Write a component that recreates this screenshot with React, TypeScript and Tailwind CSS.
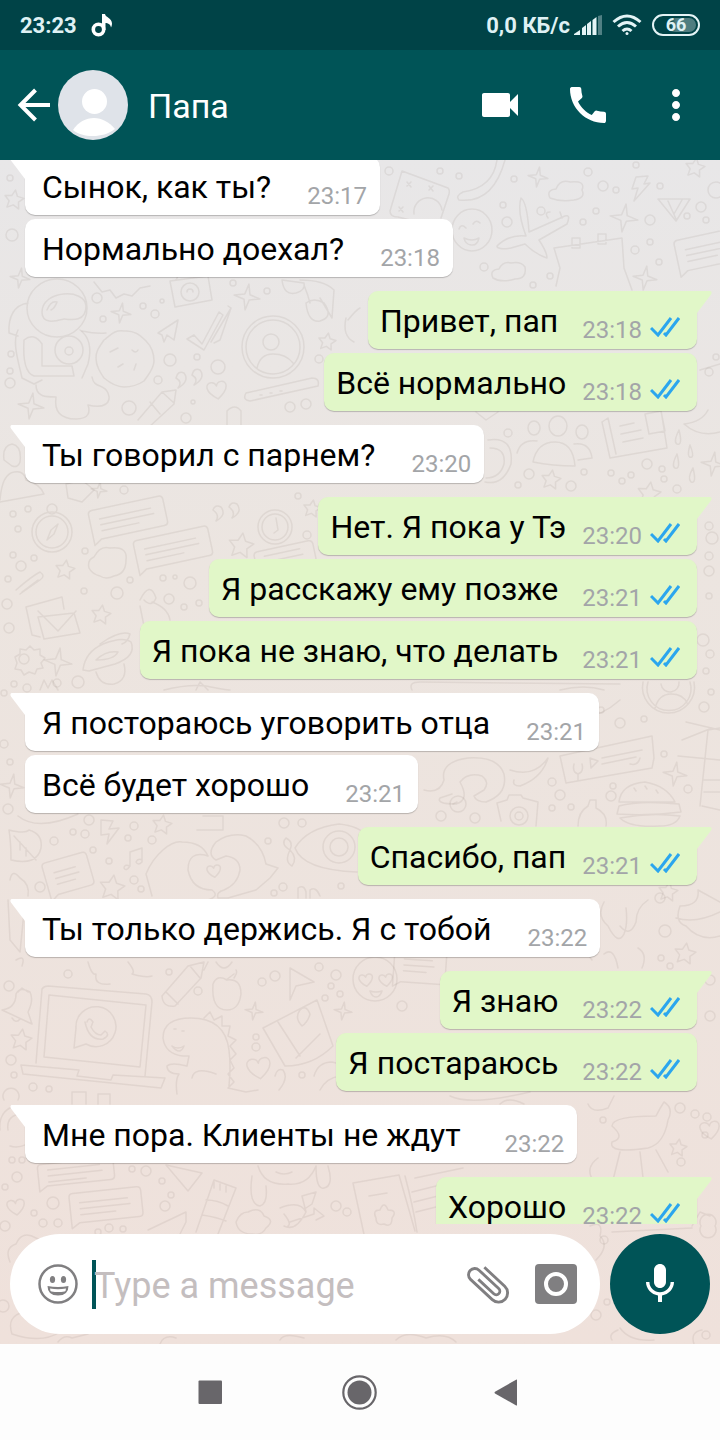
import { MdCall, MdMoreVert, MdVideocam } from 'react-icons/md';

interface Message {
  text: string;
  time: string;
  mine?: boolean;
}

// Consecutive messages of one sender form a group, the first one has the tail.
// A few of the texts were sent with a trailing space.
const groups: Message[][] = [
  [
    { text: 'Сынок, как ты?', time: '23:17' },
    { text: 'Нормально доехал?', time: '23:18' },
  ],
  [
    { text: 'Привет, пап ', time: '23:18', mine: true },
    { text: 'Всё нормально', time: '23:18', mine: true },
  ],
  [{ text: 'Ты говорил с парнем?', time: '23:20' }],
  [
    { text: 'Нет. Я пока у Тэ', time: '23:20', mine: true },
    { text: 'Я расскажу ему позже ', time: '23:21', mine: true },
    { text: 'Я пока не знаю, что делать ', time: '23:21', mine: true },
  ],
  [
    { text: 'Я постораюсь уговорить отца', time: '23:21' },
    { text: 'Всё будет хорошо', time: '23:21' },
  ],
  [{ text: 'Спасибо, пап', time: '23:21', mine: true }],
  [{ text: 'Ты только держись. Я с тобой', time: '23:22' }],
  [
    { text: 'Я знаю ', time: '23:22', mine: true },
    { text: 'Я постараюсь ', time: '23:22', mine: true },
  ],
  [{ text: 'Мне пора. Клиенты не ждут ', time: '23:22' }],
  [{ text: 'Хорошо', time: '23:22', mine: true }],
];

// x, y, radius
const dots = [
  [12, 235, 6], [10, 178, 3], [97, 298, 5], [103, 319, 3], [143, 306, 3], [155, 314, 4], [162, 301, 2],
  [170, 360, 6], [218, 367, 7], [197, 357, 3], [158, 380, 4], [129, 408, 7], [10, 383, 5], [10, 371, 3],
  [11, 354, 3], [186, 418, 5], [290, 407, 5], [306, 404, 5], [193, 402, 2], [233, 283, 3], [267, 291, 3],
  [319, 359, 4], [389, 171, 4], [440, 171, 3], [459, 176, 3], [514, 179, 3], [503, 205, 3], [507, 222, 5],
  [541, 211, 4], [588, 172, 4], [603, 186, 5], [616, 190, 3], [596, 211, 3], [583, 222, 3], [650, 220, 5],
  [660, 186, 3], [701, 207, 5], [687, 216, 3], [706, 220, 3], [635, 250, 4], [650, 242, 3], [659, 262, 3],
  [484, 267, 4], [550, 276, 3], [533, 285, 3], [716, 190, 8], [636, 165, 3], [709, 372, 4], [716, 357, 3],
  [508, 433, 4], [529, 474, 5], [518, 485, 3], [571, 486, 5], [584, 472, 3], [611, 473, 3], [622, 481, 3],
  [631, 475, 3], [647, 464, 5], [662, 469, 3], [664, 479, 3], [677, 489, 4], [13, 514, 3], [28, 509, 3],
  [18, 529, 3], [13, 555, 3], [21, 566, 5], [34, 558, 3], [8, 579, 3], [85, 551, 3], [84, 591, 3],
  [117, 593, 6], [130, 580, 3], [163, 578, 3], [175, 577, 2], [190, 583, 6], [169, 599, 5], [199, 603, 3],
  [184, 607, 3], [7, 604, 5], [9, 628, 5], [14, 684, 3], [27, 688, 4], [57, 683, 4], [78, 682, 6],
  [4, 744, 4], [10, 762, 3], [4, 693, 3], [124, 490, 4], [298, 496, 3], [307, 535, 4], [709, 526, 4],
  [712, 538, 6], [709, 556, 4], [709, 571, 5], [709, 596, 3], [703, 640, 6], [710, 654, 4], [706, 671, 3],
  [620, 723, 5], [601, 710, 3], [644, 719, 3], [704, 707, 5], [711, 692, 3], [664, 754, 3], [552, 782, 4],
  [560, 795, 5], [552, 808, 3], [571, 807, 3], [611, 796, 5], [613, 786, 3], [688, 789, 4], [475, 818, 5],
  [441, 816, 5], [458, 804, 8], [8, 809, 5], [89, 820, 5], [54, 841, 4], [73, 832, 3], [85, 834, 4],
  [93, 850, 3], [134, 826, 4], [128, 838, 3], [152, 840, 4], [109, 861, 3], [134, 880, 4], [141, 889, 3],
  [40, 887, 5], [268, 841, 3], [284, 823, 5], [302, 823, 4], [283, 887, 4], [274, 893, 3], [341, 886, 3],
  [660, 898, 5], [665, 931, 6], [661, 958, 3], [670, 966, 3], [402, 1006, 5], [710, 980, 5], [710, 1016, 5],
  [9, 986, 5], [68, 974, 4], [198, 991, 4], [169, 972, 3], [262, 982, 4], [275, 976, 5], [319, 967, 4],
  [331, 986, 3], [325, 998, 3], [340, 994, 3], [336, 975, 5], [256, 1037, 3], [256, 1047, 4], [302, 1075, 3],
  [33, 1087, 4], [11, 1060, 5], [14, 1075, 3], [49, 1089, 3], [17, 1177, 5], [12, 1160, 3], [22, 1160, 3],
  [132, 1169, 3], [146, 1171, 5], [162, 1181, 3], [5, 1187, 3], [34, 1213, 3], [43, 1223, 4], [58, 1223, 4],
  [53, 1203, 6], [5, 1226, 5], [165, 1206, 5], [171, 1195, 3], [98, 1232, 3], [109, 1228, 4], [123, 1229, 3],
  [336, 1206, 5], [347, 1212, 4], [680, 1108, 5], [707, 1117, 4], [695, 1114, 4], [603, 1120, 3],
  [681, 1162, 4], [705, 1135, 3], [596, 1315, 5], [607, 1302, 3], [706, 1335, 4], [604, 1240, 4], [3, 1306, 6],
];

// x, y, scale
const sparkles = [
  [247, 297, 13], [121, 313, 10], [31, 406, 13], [20, 278, 10], [538, 177, 10], [624, 218, 14],
  [645, 278, 12], [713, 464, 12], [58, 662, 14], [675, 774, 12], [12, 786, 12], [254, 1011, 9],
  [343, 1011, 9], [99, 490, 8],
];

const stars = [
  [14, 200, 10], [327, 342, 9], [695, 168, 10], [65, 570, 10], [101, 615, 10], [241, 546, 13],
  [312, 509, 9], [551, 480, 10], [649, 494, 12], [162, 825, 10], [112, 888, 13], [685, 954, 11],
  [21, 1040, 11], [678, 1148, 9], [668, 892, 10],
];

const hearts = [
  [217, 390, 10], [259, 1068, 12], [16, 1207, 9], [214, 871, 7], [710, 1130, 10], [366, 980, 7], [386, 980, 7],
];

// x, y, width, height, rotation
const notes = [
  [128, 518, 76, 30, -12], [173, 548, 76, 30, -12], [285, 557, 60, 22, -12], [68, 874, 46, 34, -16],
  [76, 1172, 76, 22, -6], [106, 1205, 72, 30, -6], [708, 250, 64, 32, -12], [420, 965, 52, 36, 4],
];

const shapes = [
  // astronaut and planet
  'M27 308a30 29 0 1 1 60 0a30 29 0 1 1-60 0M42 312c0-22 43-24 44-6c0 16-14 14-22 13c-8 2-22 6-22-7M47 310q4-10 10-8q-2 6-6 8M28 303c-14 2-20 14-19 30l9 3M18 330c-6 12 0 30 4 48l12 6l8-4M24 340q10-8 18 4v22h30l2 10H34q-12-4-10-36M36 385c0 12 10 12 20 12c-2 14 4 22 20 22c14 0 14-8 12-14c16 4 24-2 20-12c-4-10-14-4-16-16M80 330q14 10 8 34l-6 14M55 350a14 14 0 1 1 28 0a14 14 0 1 1-28 0M65 351a4 4 0 1 1 8 0a4 4 0 1 1-8 0',
  'M96 358c0-8 4-12 8-18c8-6 10-10 20-9c10-1 16 4 22 10c6 6 8 12 8 20c0 8-6 14-10 20c-6 4-12 6-20 6c-8 0-14-4-20-9c-4-6-8-12-8-20M110 352l8-4M118 367l5-3M132 350q4 4 6 0M134 370l2-6M82 331q14 3 24 2',
  // contact badge
  'M242 347a31 31 0 1 1 62 0a31 31 0 1 1-62 0M246 347a27 27 0 1 1 54 0a27 27 0 1 1-54 0M263 342a8 8 0 1 1 16 0a8 8 0 1 1-16 0M257 368q3-14 16-14t20 9',
  'M643 682a26 26 0 1 0 51 0M648 682a22 22 0 1 0 42 0M655 708q4-14 16-14t16 9M661 684a9 9 0 0 0 18-2',
  // ticks, plane, quotes, pencil, ruler
  'M187 339l7-4l8 9l17-32l4 3l-19 35zM211 342l20-34l-3-2M231 308l-11 32l-6 3M158 333l20-13l-4 20l-7-5l-3 7l-2-7z',
  'M176 378q2-8 8-5q6 8-6 15q5-6-2-10M192 375q2-8 8-5q6 8-6 15q5-6-2-10M138 420l24-28l14-2l-2 14l-26 24M150 402l10 12M162 392l12 11',
  'M246 393l66-15q8 0 6 8l-68 15q-8-1-4-8M260 395h2M270 393h2M280 391h2M227 425v-14q8-8 14 0v14',
  // camera and glasses
  'M170 281l38-5l4 24l-37 7zM181 292a9 9 0 1 1 18 0a9 9 0 1 1-18 0M187 292a3 3 0 1 1 6 0M176 280l2-4h8M94 282l8 10l8-2l6 8l8-4l8 2l8-8l10-2',
  'M282 280q2 16 14 13q10-3 8-10l-22-3M306 303q2 20 14 18q14-4 4-18q-10-6-18 0M304 285q4 10 6 18M300 280q24 0 34 10l-2 28l-12-20M348 320q8-10 12-12M346 318q-4 18 8 24',
  // dice, banana, clouds, bolt, airplane
  'M402 171l46 17q2 2 1 6l-8 24M402 171l-12 40q0 6 8 6l16 4M407 182l4 5m0-5l-4 4M429 186l4 5m0-5l-4 4M399 207l4 5m0-5l-4 4M414 214a14 14 0 0 1 28-4',
  'M497 160q-4 28-34 32q-8 4-4 8q34 4 46-40M550 198q-4-8 6-9q4-10 14-7q16-2 12 8q4 8-8 10q-14 2-24-2M493 278q-4-8 6-9q4-8 12-6q10-2 14 4q2 12-10 12q-14 4-22-1',
  'M636 177l12-1l-4 8l6-1l-16 18l4-13l-6 1zM526 236c-6-16-8-28-5-38q6 4 8 34l36-16q6-2 2 8l-28 16q8 12 8 18q-12-4-22-14l-14 4q-14 2-14-2q12-12 29-10M548 218q-4-6 2-6M560 212l2 6',
  // smiling faces
  'M452 230a20 21 0 1 1 40 0a20 21 0 1 1-40 0M459 229q2-6 7-1M473 224q3-5 7-1M464 238q8 4 15 0q-2 8-8 7t-7-7',
  'M353 979a22 22 0 1 1 44 0a22 22 0 1 1-44 0M370 991q6 2 12 0q-2 6-6 6t-6-6',
  // calendar and party hat
  'M554 248l68-10l2 30l8 22M554 248l6 20l-4 18M572 238h8v10h-8zM598 234h8v10h-8zM658 199h32l-14 22zM668 201l8 18M682 200l-8 14',
  // people, news page, drops
  'M533 462q4-20 22-20t20 24q-22 0-42-4M549 426a9 10 0 1 1 18 0a9 10 0 1 1-18 0M528 428a6 7 0 1 1 12 0a6 7 0 1 1-12 0M576 432a6 7 0 1 1 12 0a6 7 0 1 1-12 0M517 453q4-14 20-12M574 444q16-2 18 14l-14 2',
  'M602 422l8 36l57-10l-6-38M602 422l6-4l8 36M620 426l14-3M621 434l20-4M623 442l20-4M645 414l16-3l4 20l-16 3zM679 430q-6 12-2 14q6 2 2-14M690 445q4 10 2 12q-6 2-2-12M677 454q-6 12-2 14q6 2 2-14M693 468q-6 10-2 14q6 2 2-14',
  'M488 440q26-4 23 24q-8 22-26 18M490 448q16 0 14 16q-4 14-18 14M684 424q18-2 24-14M684 424q16 14 36 8M700 370l20-6M476 412l10 8l12-8',
  // person, compass, speech, sticker
  'M4 460q-2-14 8-16q10 2 8 18q-2 6-8 4zM0 500q2-26 14-28q10-2 12 8q14 4 18 14l-44 8M66 484l16-4l12 10l-12 12l-14-4z',
  'M32 532a20 20 0 1 1 40 0a20 20 0 1 1-40 0M36 532a16 16 0 1 1 32 0a16 16 0 1 1-32 0M47 540l4-10l7-6l-4 10zM47 509a5 5 0 1 1 10 0a5 5 0 1 1-10 0',
  'M89 568q-2-8 5-11q6-12 16-9q18-2 16 12q0 14-12 16q-8 4-14 0q-8-2-11-8M258 527a17 17 0 1 1 34 0a17 17 0 1 1-34 0M262 527a13 13 0 1 1 26 0a13 13 0 1 1-26 0M276 518l2 12l-4 3',
  'M213 510q2-6 8-3q6 8-5 14q4-6-3-11M229 507q2-6 8-3q6 8-5 14q4-6-3-11',
  // letters, paperclip, gear, rocket
  'M38 617l36 -4l6 20l-36 6zM38 611l20 20l18-20M26 607l36-10l2 12M26 607l6 28l8 2M16 590q16-14 24-18q6 4 0 8l-20 14M22 592l16-12',
  'M15 657l5-3v-5l6 1l4-4l4 4l6-1l0 6l5 3l-4 5l2 5l-6 1l-2 5l-6-2l-5 3l-3-5l-6-1l2-6zM19 659a5 5 0 1 1 10 0a5 5 0 1 1-10 0',
  'M83 670q2-18 20-26q20-8 28-2q6 14-16 22l-26 7zM96 660q10-10 22-8q-4 8-22 8M100 644q20-14 30-10q-2 8-8 10M96 672q4 14 18 12q14-4 10-20M140 600q10-20 16-2q-4 10-12 2M140 606l4 20M152 602q16 6 18 18',
  'M40 690l4-10l4 8l4-8l6 10M164 690q24-6 42-4q20 4 24 4M196 690l4-8l8 8',
  // gamepad, dog, audio player, burger, tower
  'M424 790q16 4 20-10q-4-18 24-22q30-2 36 16q4 20-18 28q-10 0-12-6l10-6q6-8-2-14q-14-4-22 6q10 18-4 22q-20 0-16-6l12-4M510 770q24 8 38-12q-6 20-28 28q-8 0-6-6',
  'M560 756l92-20l2 22l-2 10l-86 15zM574 764q-2 8 4 10q6-2 4-10M578 774v6M590 758l8 3l-7 7zM602 758l40-8M602 764l34-7M630 764q8 2 10-6',
  'M619 802q2-18 26-20q22 4 30 20zM619 806q20-6 60-2l2 8q-30 4-64 2zM620 818q30-6 60-2q-4 10-20 10q-30 2-40-8M634 788l2 3M645 786l2 3M656 790l2 3',
  'M682 740l30-12M686 722l34 8M678 756l42 4M700 806l8-76l12-2M704 780h16M704 792h16M702 806l18 4',
  'M497 803l10-3l2-5h12l2 3l15 4l-2 24M497 803l4 18M510 816a9 9 0 1 1 18 0a9 9 0 1 1-18 0M515 816a4 4 0 1 1 8 0a4 4 0 1 1-8 0M578 826q0-14 10-20l2-6h6l0 8q12 6 10 18',
  'M453 804l4-2M412 690q-4-8 8-8l200 2M560 690q24-6 44 0M620 700q-18 16-38 18',
  // leaf, bolt, notes, hands
  'M9 830q16 4 20 0q14 4 12 18q-4 18-30 12q0-18-2-30M14 836l22 24M20 842v8M26 848v8M18 816q20 16 60-2M101 820l12 1l-4 8l10-1l-12 16l2-10l-8 1z',
  'M130 852l12-4v14q-4 4-6 0q2-4 6-2M130 852v14q-4 6-6 2q0-4 6-2M146 874c8-20 26-34 36-32q20 0 26 14M146 874l6 22M208 856q-20-6-20 14q4 20 24 20q8 6-4 10h-36',
  'M216 842q14-10 30-6q16 8 20 28l12 4l-8 10l-14 12l-28 8h-10q-2-6 6-8q14-6 16-20q0-12-14-14l-10 4q-10-6 0-18',
  'M295 848q12-20 44-24q20 2 28 12M295 848q8 22 62 24M323 847a16 16 0 1 1 32 0a16 16 0 1 1-32 0M330 847a9 9 0 1 1 18 0a9 9 0 1 1-18 0M290 850q-10-6-4-12q8 4 4 12q-6 12 2 16q6-8-2-16M298 898v-10q6-4 8 4v6M310 898v-8q6-4 10 6',
  'M197 830h26v-14h-20M10 880q2-12 10-2q10 6 8 18M8 900l2 40l10 12l4-40M16 960q10-6 6 6',
  'M604 902q-8 14 4 24q10 20 16 8q4-10 2-26M620 926q10 12 16-4q0-14 12-22M680 906q20 0 18-16l22 12M680 906q-6 16 6 20q14 16 34 10M676 918q20 6 44-6',
  'M604 954q10-8 14 14M638 948q10 6 4 20M586 952l6 8',
  // bell, laptop, pencil, apple, dino
  'M2 1010q14-2 14-16q4-8 14 -2q4 8-2 20l4 12zM18 992l4-4l6 4M12 1018q4 6 8 1',
  'M42 989q2-3 6-3l98 8q6 1 6 8l-7 74M42 989l-6 74M49 995l97 10l-6 62l-96-10zM21 1065l58 5l-2 6l34 4l2-5l52 3l-4 10l-138-14zM76 1028a20 20 0 1 1 10 16l-12 4zM87 1022q2-6 6 0l-2 5q4 8 10 8l4-4q6 4-2 8q-14 2-18-17',
  'M162 996l26-30l16-4l-3 16l-26 28q-12 2-13-10M166 992l12 12M190 966l10 12M213 984q4-10 14-4q14-2 14 14q-2 16-14 16q-16 0-14-26M226 980l8-6M234 978q4-6 2-8',
  'M88 962q4 14 8 12q-2 12 14 10M128 962q8 10 4 12q14 4 20 2M216 962q8 12 16 0M204 970l4-8',
  'M163 1038q0-20 28-20q34 0 38 32q2 16 0 36M163 1038q2 16 20 18l6 0l-2 10q-16-4-20 0q0 8 12 8q-4 6-2 20M192 1078q2-12 24-4M172 1046q6 4 12 0q-4 10-12 0M174 1029h2M182 1031h2M204 1018l6-6l4 8l8-4l0 10l8 0l-2 10l8 4l-6 6l6 8l-6 6l4 8l-6 6l6 8l-6 6l18 4l12-2',
  // arrow, map, mic
  'M290 968l24 14l-18 4l-6 14zM263 1028l54-28l16 46q-20 20-48 20zM278 1022l22 34M300 1010q6-6 10 4q-2 8-8 12q-8-8-2-16M296 1058l24-24M275 1076q2-8 8-6q6 8-4 20M314 1076q4-14 18-14l8 2M320 1090q6-12 20-14',
  'M72 1104v-12h14v12M98 1104v-10h12v10M4 1100a8 8 0 1 1 14 0M0 1130q-2-18 14-24M10 1146q12 4 26-8M8 1130q-2-14 12-16',
  // cone, socks, map arrow, dog
  'M166 1165l36 8l-14 18zM196 1232l18-52l22 8l-18 46M202 1215q14 2 24 6M206 1200q12 0 22 6M214 1182v6M220 1184v6M226 1186v6M148 1230l38-18v10l-6 12',
  'M252 1176q-4 28 8 30q8-2 6-20M258 1166q6 20 30 18q20 2 28-18M316 1166q0 24 8 22q10-2 4-22M276 1172q8 4 16 0M236 1222q4-10 12-10q12-6 16 4q12 4 2 12q-4 8-14 6q-14 0-16-12',
  'M280 1208q20-8 26 4q-10 20-22 14M306 1212l-4-16l14-4l-4 12l-6 4M290 1222l24-8v-6l10 8l-8 4M284 1214q8 10 4 12',
  // book, flower, key, chair
  'M353 1183l46-8l16 56M353 1183l12 56M415 1178l48-10M405 1176q8 30 12 56M369 1196l18-3M412 1192l24-6M414 1202l24-6M416 1212l20-5M380 1210q4-10 8 0q10 0 4 8q0 10-8 6q-8 2-8-6q-4-8 4-8',
  'M612 1126q0-10 44-10q4-8 8-14q10 6 4 18q-4 24-20 28q-40 6-36-6q14-4 0-16M620 1152l-10 40M640 1152l4 34M656 1150l12 22M450 1096q20 10 80-4M500 1104q8-8 24 0M588 1104q4 10 20 4l6-12M598 1158q-14 10-4 24',
  'M692 1226l8-14l10 4M701 1226a8 8 0 1 1 14 0a8 8 0 1 1-14 0M590 1226q14-6 10 10q10 10-4 24M612 1232l80-4',
  // behind the composer
  'M10 1262q-6-14 6-18q6-14 20-6l8 4M12 1334q-6-18 12-22l6 4M12 1334q30 10 48-2M58 1342q6-8 14-4l16-4M160 1344q4-10 16-6M280 1340q4-8 24-2M396 1340q10-10 30-2q20-6 30 4M620 1328q10 14 34 12M694 1344q-4-12 8-14M618 1330q-10 4-6 10',
];

function starPath(points: number, inner: number) {
  const parts: string[] = [];
  for (let i = 0; i < points * 2; i++) {
    const r = i % 2 ? inner : 1;
    const a = (Math.PI * i) / points - Math.PI / 2 + 0.15;
    parts.push(`${(Math.cos(a) * r).toFixed(2)} ${(Math.sin(a) * r).toFixed(2)}`);
  }
  return `M${parts.join('L')}Z`;
}

const sparklePath = starPath(4, 0.28);
const fivePath = starPath(5, 0.5);

function Wallpaper() {
  return (
    <svg
      className="absolute inset-0 size-full"
      viewBox="0 160 720 1184"
      preserveAspectRatio="xMidYMid slice"
      fill="none"
      stroke="#8a7a76"
      strokeOpacity="0.13"
      strokeWidth="1.5"
      strokeLinejoin="round"
      strokeLinecap="round"
      aria-hidden="true"
    >
      {dots.map(([x, y, r], i) => (
        <circle key={i} cx={x} cy={y} r={r} />
      ))}
      {sparkles.map(([x, y, s], i) => (
        <path key={i} d={sparklePath} transform={`translate(${x} ${y}) scale(${s})`} vectorEffect="non-scaling-stroke" />
      ))}
      {stars.map(([x, y, s], i) => (
        <path key={i} d={fivePath} transform={`translate(${x} ${y}) scale(${s})`} vectorEffect="non-scaling-stroke" />
      ))}
      {hearts.map(([x, y, s], i) => (
        <path
          key={i}
          d="M0 .9C-1.3 0-1.1-.8-.5-.8Q-.1-.8 0-.4Q.1-.8.5-.8C1.1-.8 1.3 0 0 .9Z"
          transform={`translate(${x} ${y}) rotate(-8) scale(${s})`}
          vectorEffect="non-scaling-stroke"
        />
      ))}
      {notes.map(([x, y, w, h, r], i) => (
        <g key={i} transform={`translate(${x} ${y}) rotate(${r})`}>
          <path d={`M${-w / 2} ${h / 2 + 5}V${-h / 2 + 4}q0-4 4-4H${w / 2 - 4}q4 0 4 4V${h / 2 - 4}q0 4-4 4H${-w / 2 + 8}Z`} />
          <path d={`M${-w / 2 + 10}-5H${w / 2 - 14}M${-w / 2 + 10} 1H${w / 2 - 12}M${-w / 2 + 10} 7H${w / 8}`} />
        </g>
      ))}
      {shapes.map((d, i) => (
        <path key={i} d={d} />
      ))}
    </svg>
  );
}

function StatusBar() {
  return (
    <div className="flex h-[50px] shrink-0 items-center bg-[#004347] px-5 text-[22px] font-bold leading-none text-[#dff1f4]">
      <span className="pt-0.5">23:23</span>
      <svg className="ml-3.5 h-6 w-[22px]" viewBox="0 0 22 24" fill="none" aria-hidden="true">
        <circle cx="7.500" cy="16.500" r="5.200" stroke="#fff" strokeWidth="3.600" />
        <path d="M11 1h3c.5 3.500 7 4 7 9.500c0 1.500-.5 3-1 4c-.5-3.500-3.500-4.500-5.500-4.500v7H11z" fill="#fff" />
      </svg>
      <span className="ml-auto pt-0.5">0,0 КБ/с</span>
      <svg className="ml-1 h-5 w-7" viewBox="0 0 28 20" fill="#e4f4f6" aria-hidden="true">
        <path d="M0 20v-1l6-4v5zM8 20v-7l4-3v10zM13 20V9l4-3v14zM18.500 20V5l4-3v18z" />
        <path d="M24 20V1l4-1v20z" opacity="0.35" />
      </svg>
      <svg className="ml-2.5 h-[22px] w-[30px]" viewBox="0 0 30 22" fill="none" stroke="#e4f4f6" strokeWidth="3" aria-hidden="true">
        <path d="M1.500 8q13.500-12 27 0M6 12.500q9-8 18 0M10.500 17q4.500-4 9 0" />
        <circle cx="15" cy="19.500" r="1.500" fill="#e4f4f6" stroke="none" />
      </svg>
      <span className="ml-2.5 flex h-[22px] w-12 items-center justify-center rounded-full border-2 border-[#e4f4f6] bg-linear-to-r from-transparent from-35% via-[#4f7d80] via-50% to-[#4f7d80] bg-clip-content p-0.5 text-lg font-bold leading-none">
        66
      </span>
    </div>
  );
}

function ChatHeader() {
  return (
    <header className="flex h-[110px] shrink-0 items-center bg-[#005457] pl-4 pr-5 text-white">
      <button type="button" aria-label="Back" className="flex h-12 w-9 items-center justify-center">
        <svg className="size-9" viewBox="0 0 36 36" fill="none" stroke="currentColor" strokeWidth="4" aria-hidden="true">
          <path d="M34 18H5M19.500 3L4.500 18l15 15" />
        </svg>
      </button>
      <svg className="ml-1.5 size-[70px] shrink-0" viewBox="0 0 70 70" role="img" aria-label="Папа">
        <circle cx="35" cy="35" r="35" fill="#dfe3e9" />
        <circle cx="36.500" cy="31.500" r="12.500" fill="#fff" />
        <path d="M15 60C20 52 28 48 36 48s15 4 21 11C50 64 43 66 35 66s-15-2-20-6z" fill="#fff" />
      </svg>
      <h1 className="ml-5 min-w-0 flex-1 truncate pt-0.5 text-[34px] font-normal leading-10">Папа</h1>
      <div className="flex gap-10">
        <button type="button" aria-label="Video call"><MdVideocam className="size-12" /></button>
        <button type="button" aria-label="Call"><MdCall className="size-12" /></button>
        <button type="button" aria-label="More options"><MdMoreVert className="size-12" /></button>
      </div>
    </header>
  );
}

function ReadTicks() {
  return (
    <svg className="mb-3 ml-2 h-5 w-[30px]" viewBox="0 0 30 20" fill="none" stroke="#2ba6ee" strokeWidth="3" role="img" aria-label="Read">
      <path d="M1 11l7 7L21 1M14 16l2 2L29 1" />
    </svg>
  );
}

function Bubble({ message, tail }: { message: Message; tail: boolean }) {
  const { text, time, mine } = message;
  const corner = tail ? (mine ? 'rounded-tr-none' : 'rounded-tl-none') : '';

  return (
    <li
      className={`relative flex items-end whitespace-pre rounded-[10px] shadow-[0_1px_1px_rgba(0,0,0,0.22)] ${corner} ${
        mine ? 'self-end bg-[#e1f7c8] pl-3 pr-[17px]' : 'self-start bg-white pl-[17px] pr-[13px]'
      }`}
    >
      {tail && (
        <svg
          className={`absolute top-0 h-[22px] w-4 ${mine ? '-right-[15px] fill-[#e1f7c8]' : '-left-[15px] fill-white'}`}
          viewBox="0 0 16 22"
          aria-hidden="true"
        >
          <path d={mine ? 'M0 0H14.500Q16.500 1 15 3.500L1 22H0z' : 'M16 0H1.500Q-.5 1 1 3.500L15 22H16z'} />
        </svg>
      )}
      <p className="pt-0.5 text-[32px] leading-14 text-black">{text}</p>
      <time className={`mb-[5px] text-2xl leading-7 text-[#a3a5a8] ${mine ? 'ml-4' : 'ml-9'}`}>{time}</time>
      {mine && <ReadTicks />}
    </li>
  );
}

function Composer() {
  return (
    <form className="relative flex shrink-0 items-center gap-2.5 p-2.5" onSubmit={(e) => e.preventDefault()}>
      <div className="flex h-[100px] min-w-0 flex-1 items-center rounded-full bg-white pl-7 pr-[23px] text-[#807f81]">
        <button type="button" aria-label="Emoji">
          <svg className="size-10" viewBox="0 0 40 40" fill="none" aria-hidden="true">
            <circle cx="20" cy="20" r="18.500" stroke="currentColor" strokeWidth="2.500" />
            <ellipse cx="14.500" cy="15.500" rx="2.600" ry="3.500" fill="currentColor" />
            <ellipse cx="25.500" cy="15.500" rx="2.600" ry="3.500" fill="currentColor" />
            <path d="M9.500 22q10.500 2 21 0q0 9.500-10.500 9.500T9.500 22z" fill="currentColor" />
            <path d="M12 24.500q8 1.500 16 0q0 2.500-1.500 3q-6.500 1-13 0q-1.500-.5-1.500-3z" fill="#fff" />
          </svg>
        </button>
        <span className="-mr-0.5 ml-3.5 h-[49px] w-1 shrink-0 bg-[#005457]" />
        <input
          type="text"
          aria-label="Type a message"
          placeholder="Type a message"
          className="h-14 min-w-0 flex-1 bg-transparent pt-1 text-[36px] text-black outline-none placeholder:text-[#c4bebf]"
        />
        <button type="button" aria-label="Attach">
          <svg className="h-10 w-11" viewBox="0 0 44 40" fill="none" stroke="currentColor" strokeWidth="3" aria-hidden="true">
            <path
              d="M-15-10.500H14a9.500 9.500 0 0 1 0 19H-17a6.500 6.500 0 0 1 0-13H11a3.500 3.500 0 0 1 0 7.500H-11"
              transform="translate(21 20.500) rotate(43) scale(.96)"
            />
          </svg>
        </button>
        <button type="button" aria-label="Camera" className="ml-6">
          <svg className="h-10 w-[42px]" viewBox="0 0 42 40" aria-hidden="true">
            <rect width="42" height="40" rx="4" fill="currentColor" />
            <circle cx="21" cy="20" r="10" fill="none" stroke="#fff" strokeWidth="4" />
          </svg>
        </button>
      </div>
      <button
        type="button"
        aria-label="Record a voice message"
        className="flex size-[100px] shrink-0 items-center justify-center rounded-full bg-[#005457] text-white"
      >
        <svg className="size-12" viewBox="0 0 24 24" fill="currentColor" aria-hidden="true">
          <path d="M12 14c1.660 0 2.990-1.340 2.990-3L15 5c0-1.660-1.340-3-3-3S9 3.340 9 5v6c0 1.660 1.340 3 3 3z" />
          <path d="M17.300 11c0 3-2.540 5.100-5.300 5.100S6.700 14 6.700 11H5c0 3.410 2.720 6.230 6 6.720V21h2v-3.280c3.280-.48 6-3.300 6-6.720h-1.700z" />
        </svg>
      </button>
    </form>
  );
}

function SystemNav() {
  return (
    <nav className="flex h-24 shrink-0 items-center justify-center gap-[102px] bg-[#fdfdfd] text-[#68666a]">
      <button type="button" aria-label="Recent apps">
        <svg className="size-12" viewBox="0 0 48 48" fill="currentColor" aria-hidden="true">
          <rect x="12.500" y="12.500" width="23.500" height="23.500" rx="1" />
        </svg>
      </button>
      <button type="button" aria-label="Home">
        <svg className="size-12" viewBox="0 0 48 48" fill="currentColor" aria-hidden="true">
          <circle cx="23.500" cy="24.500" r="12" />
          <circle cx="23.500" cy="24.500" r="16.200" fill="none" stroke="currentColor" strokeWidth="2.200" />
        </svg>
      </button>
      <button type="button" aria-label="Back to previous screen">
        <svg className="size-12" viewBox="0 0 48 48" fill="currentColor" aria-hidden="true">
          <path d="M30.500 11.500q.5-.2.500.5v25q0 .8-.8.500L9 25.500q-1-1 0-1.800z" />
        </svg>
      </button>
    </nav>
  );
}

export default function App() {
  return (
    <div className="flex h-screen flex-col overflow-hidden font-[Roboto,'Noto_Sans',sans-serif]">
      <StatusBar />
      <ChatHeader />
      <main className="relative flex min-h-0 flex-1 flex-col bg-linear-to-b from-[#e8e7e8] via-[#ece5e0] via-35% to-[#efe1db]">
        <Wallpaper />
        <div className="relative min-h-0 flex-1 overflow-hidden">
          {/* scrolled by a few pixels, the first bubble slides under the header */}
          <div className="-mt-[3px] flex flex-col gap-3.5 pl-[25px] pr-[23px]">
            {groups.map((group, i) => (
              <ul key={i} className="flex flex-col gap-1">
                {group.map((message, j) => (
                  <Bubble key={j} message={message} tail={j === 0} />
                ))}
              </ul>
            ))}
          </div>
        </div>
        <Composer />
      </main>
      <SystemNav />
    </div>
  );
}
